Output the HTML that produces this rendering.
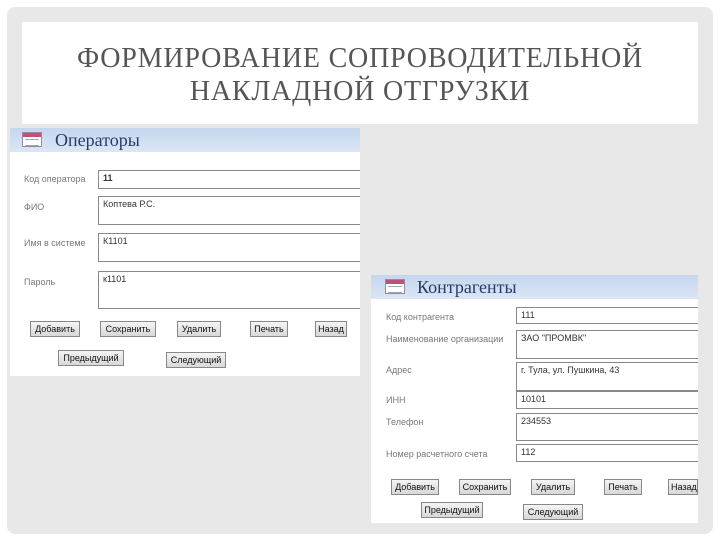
<!DOCTYPE html>
<html><head><meta charset="utf-8"><style>
*{margin:0;padding:0;box-sizing:border-box}
body{width:720px;height:540px;background:#fff;position:relative;overflow:hidden;font-family:"Liberation Sans",sans-serif}
.slide{position:absolute;left:7px;top:7px;width:706px;height:527px;background:#e8e8e8;border-radius:8px}
.title{position:absolute;left:22px;top:22px;width:676px;height:102px;background:#fff;text-align:center;font-family:"Liberation Serif",serif;color:#555;font-size:28px;line-height:33px;padding-top:20px;letter-spacing:0.8px}
.form{position:absolute;background:#fff;font-size:9px;color:#777}
.hdr{position:absolute;left:0;right:0;top:0;height:24px;background:linear-gradient(#c5d6ee,#dbe6f5);}
.hdr .t{position:absolute;top:2px;font-family:"Liberation Serif",serif;font-size:18px;color:#2a3a68}
.ic{position:absolute;top:4px;width:20px;height:15px;border:1px solid #9a8aa0;background:#fff}
.ic:before{content:"";position:absolute;left:0;right:0;top:0;height:4px;background:#c0507a}
.ic:after{content:"";position:absolute;left:2px;right:2px;top:6px;height:5px;border-top:1px solid #9ab;border-bottom:1px solid #9ab}
.lbl{position:absolute}
.box{position:absolute;border:1px solid #888;border-right:none;background:#fff;color:#333;padding:2px 4px;font-size:9px}
.btn{position:absolute;height:16px;background:linear-gradient(#f4f4f4,#d8d8d8);border:1px solid #888;font-size:9px;color:#111;text-align:center;line-height:14px;padding:0 2px}
</style></head><body>
<div class="slide"></div>
<div class="title">ФОРМИРОВАНИЕ СОПРОВОДИТЕЛЬНОЙ<br>НАКЛАДНОЙ ОТГРУЗКИ</div>

<div class="form" style="left:10px;top:128px;width:350px;height:248px">
 <div class="hdr"><div class="ic" style="left:12px"></div><div class="t" style="left:45px">Операторы</div></div>
 <div class="lbl" style="left:14px;top:46px">Код оператора</div>
 <div class="box" style="left:88px;top:42px;width:262px;height:19px;font-weight:bold">11</div>
 <div class="lbl" style="left:14px;top:74px">ФИО</div>
 <div class="box" style="left:88px;top:68px;width:262px;height:29px">Коптева Р.С.</div>
 <div class="lbl" style="left:14px;top:110px">Имя в системе</div>
 <div class="box" style="left:88px;top:105px;width:262px;height:29px">К1101</div>
 <div class="lbl" style="left:14px;top:149px">Пароль</div>
 <div class="box" style="left:88px;top:143px;width:262px;height:38px">к1101</div>
 <div class="btn" style="left:20px;top:193px;width:50px">Добавить</div>
 <div class="btn" style="left:90px;top:193px;width:56px">Сохранить</div>
 <div class="btn" style="left:167px;top:193px;width:44px">Удалить</div>
 <div class="btn" style="left:240px;top:193px;width:38px">Печать</div>
 <div class="btn" style="left:305px;top:193px;width:32px">Назад</div>
 <div class="btn" style="left:48px;top:222px;width:66px">Предыдущий</div>
 <div class="btn" style="left:156px;top:224px;width:60px">Следующий</div>
</div>

<div class="form" style="left:371px;top:275px;width:327px;height:248px">
 <div class="hdr"><div class="ic" style="left:14px"></div><div class="t" style="left:46px">Контрагенты</div></div>
 <div class="lbl" style="left:15px;top:37px">Код контрагента</div>
 <div class="box" style="left:145px;top:32px;width:182px;height:17px">111</div>
 <div class="lbl" style="left:15px;top:59px">Наименование организации</div>
 <div class="box" style="left:145px;top:55px;width:182px;height:29px">ЗАО "ПРОМВК"</div>
 <div class="lbl" style="left:15px;top:90px">Адрес</div>
 <div class="box" style="left:145px;top:87px;width:182px;height:29px">г. Тула, ул. Пушкина, 43</div>
 <div class="lbl" style="left:15px;top:120px">ИНН</div>
 <div class="box" style="left:145px;top:116px;width:182px;height:18px">10101</div>
 <div class="lbl" style="left:15px;top:142px">Телефон</div>
 <div class="box" style="left:145px;top:138px;width:182px;height:28px">234553</div>
 <div class="lbl" style="left:15px;top:174px">Номер расчетного счета</div>
 <div class="box" style="left:145px;top:169px;width:182px;height:18px">112</div>
 <div class="btn" style="left:20px;top:204px;width:48px">Добавить</div>
 <div class="btn" style="left:88px;top:204px;width:52px">Сохранить</div>
 <div class="btn" style="left:160px;top:204px;width:44px">Удалить</div>
 <div class="btn" style="left:233px;top:204px;width:38px">Печать</div>
 <div class="btn" style="left:297px;top:204px;width:30px">Назад</div>
 <div class="btn" style="left:50px;top:227px;width:62px">Предыдущий</div>
 <div class="btn" style="left:152px;top:229px;width:60px">Следующий</div>
</div>
</body></html>
